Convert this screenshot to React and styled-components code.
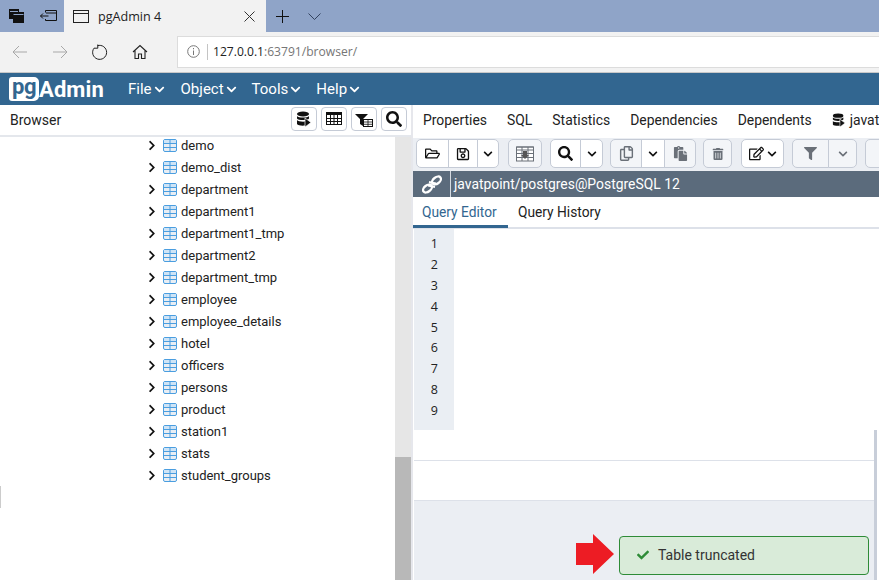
import React from 'react';
import styled, { createGlobalStyle } from 'styled-components';
import {
  FaRegFolderOpen, FaRegSave, FaSearch, FaRegCopy, FaPaste, FaTrashAlt, FaRegEdit, FaFilter, FaChevronRight, FaChevronDown, FaCheck,
} from 'react-icons/fa';

const Global = createGlobalStyle`
  html, body { margin: 0; padding: 0; background: #fff; }
  * { box-sizing: border-box; }
  #root { width: 879px; height: 580px; overflow: hidden; }
`;

const Page = styled.div`
  position: relative; width: 879px; height: 580px; overflow: hidden; display: flex; flex-direction: column;
  font-family: Roboto, "Liberation Sans", sans-serif; font-size: 14px; color: #222;
`;
const TabStrip = styled.div`
  height: 32px; background: #8fa4c8; display: flex; align-items: center; flex: none;
`;
const StripIcon = styled.div`
  width: ${p => p.$w}px; display: flex; justify-content: center; align-items: center; color: #111;
`;
const BrowserTab = styled.div`
  width: 202px; height: 32px; background: #f2f2f2; display: flex; align-items: center; padding-left: 9px;
  font-family: "Open Sans", sans-serif; font-size: 12.6px; color: #222;
`;
const TabTitle = styled.span`
  margin-left: 9px; flex: 1;
`;
const TabClose = styled.div`
  width: 34px; display: flex; justify-content: center;
`;
const AddressBar = styled.div`
  height: 41px; background: #f2f2f2; border-bottom: 1px solid #c8c8c8; display: flex; align-items: center; flex: none; padding-bottom: 1px;
`;
const NavBtn = styled.div`
  width: 40px; display: flex; justify-content: center; align-items: center;
`;
const UrlBox = styled.div`
  margin-left: 17px; flex: 1; height: 32px; margin-right: -4px; background: #fff; border: 1px solid #dcdcdc;
  display: flex; align-items: center; padding-left: 9px;
  font-family: "Open Sans", sans-serif; font-size: 12.1px; color: #767676;
`;
const UrlDivider = styled.div`
  width: 1px; height: 16px; background: #c4c4c4; margin: 0 5px 0 7px;
`;
const UrlHost = styled.span` color: #222; `;
const NavBar = styled.div`
  height: 32px; background: #326690; display: flex; align-items: center; flex: none; padding-left: 9px;
`;
const Logo = styled.div`
  display: flex; align-items: center; width: 119px; font-family: Roboto, sans-serif; font-weight: 700; color: #fff; font-size: 22px; letter-spacing: .1px;
`;
const LogoBadge = styled.span`
  width: 30px; height: 24px; background: #fff; color: #326690; border-radius: 3px 5px 5px 3px; display: flex; align-items: center; justify-content: center;
  font-size: 22px; line-height: 20px; padding-bottom: 4px; letter-spacing: -.4px;
`;
const Menu = styled.div`
  display: flex; align-items: center; gap: 2px; color: #fff; font-size: 15px; margin-right: ${p => p.$mr}px;
  svg { width: 11px; height: 11px; margin-top: 1px; }
`;
const Body = styled.div`
  flex: 1; display: flex; min-height: 0;
`;
const LeftPanel = styled.div`
  width: 411px; flex: none; display: flex; flex-direction: column; background: #fff;
`;
const PanelHead = styled.div`
  height: 32px; flex: none; display: flex; align-items: center; padding: 0 4px 3px 10px; border-bottom: 2px solid #e4e7ec; gap: 4px; font-size: 14px;
`;
const PanelTitle = styled.span` flex: 1; padding-top: 2px; `;
const IconBtn = styled.div`
  width: 26px; height: 24px; border: 1px solid #c5cbd6; border-radius: 4px; display: flex; align-items: center; justify-content: center; color: #111; background: #fff;
`;
const LeftBody = styled.div`
  flex: 1; display: flex; min-height: 0;
`;
const Tree = styled.div`
  flex: 1; overflow: hidden;
`;
const TreeList = styled.div`
  margin-top: -3px; padding-left: 146px;
`;
const TreeRow = styled.div`
  height: 22px; display: flex; align-items: center; font-size: 13px; color: #222;
`;
const Chevron = styled.div`
  width: 17px; display: flex; align-items: center; color: #111; svg { width: 10px; height: 11px; margin-left: 1px; }
`;
const RowLabel = styled.span` margin-left: 4px; `;
const Scroll = styled.div`
  width: 16px; flex: none; background: #e6e6e6; display: flex; flex-direction: column; justify-content: flex-end;
`;
const ScrollThumb = styled.div`
  height: 123px; background: #b8b8b8;
`;
const RightPanel = styled.div`
  flex: 1; display: flex; flex-direction: column; min-width: 0; border-left: 2px solid #e6e7ec; overflow: hidden;
`;
const PropTabs = styled.div`
  height: 33px; flex: none; display: flex; align-items: center; gap: 20px; padding-left: 10px; white-space: nowrap; background: #fff; padding-bottom: 3px; font-size: 13.92px;
`;
const PropConn = styled.span`
  display: flex; align-items: center; gap: 4px;
`;
const Toolbar = styled.div`
  height: 33px; flex: none; background: #ebeef3; display: flex; align-items: flex-start; padding: 1px 0 0 3px; white-space: nowrap;
`;
const Group = styled.div`
  display: flex; flex: none; height: 29px; margin-right: ${p => p.$mr}px;
`;
const ToolBtn = styled.div`
  width: ${p => p.$w}px; height: 29px; flex: none; display: flex; align-items: center; justify-content: center; gap: 3px;
  background: ${p => p.$off ? '#f3f5f8' : '#fff'}; color: ${p => p.$off ? '#6a7078' : '#111'};
  border: 1px solid #c5cbd6; margin-left: -1px;
  &:first-child { margin-left: 0; border-radius: 5px 0 0 5px; }
  &:last-child { border-radius: 0 5px 5px 0; }
  &:only-child { border-radius: 5px; }
`;
const TitleBar = styled.div`
  height: 26px; flex: none; background: #5b6b7c; display: flex; align-items: center; color: #fff; font-size: 13.9px;
`;
const TitleIcon = styled.div`
  width: 38px; height: 26px; display: flex; align-items: center; justify-content: center; border-right: 1px solid #d6dbe2; margin-right: 3px;
`;
const QueryTabs = styled.div`
  height: 32px; flex: none; display: flex; background: #fff; border-bottom: 2px solid #dde1e9; font-size: 13.75px;
`;
const QueryTab = styled.div`
  height: 31px; padding: 7px 0 0 ${p => p.$active ? 9 : 10}px; width: ${p => p.$w}px; white-space: nowrap; color: ${p => p.$active ? '#326690' : '#222'};
  border-bottom: ${p => p.$active ? '3px solid #326690' : 'none'};
`;
const Editor = styled.div`
  height: 201px; flex: none; display: flex; background: #fff; padding-left: 1px;
`;
const Gutter = styled.div`
  width: 40px; background: #eaeef3; padding-top: 5px;
`;
const LineNo = styled.div`
  height: 20.9px; line-height: 20.9px; text-align: right; padding-right: 16px; font-family: "Open Sans", sans-serif; font-size: 12.5px; color: #222;
`;
const Lower = styled.div`
  flex: 1; display: flex; flex-direction: column; margin-left: 1px; border-right: 3px solid #c8ced9; margin-right: 2px;
`;
const WhiteStrip = styled.div`
  height: ${p => p.$h}px; flex: none; background: #fff; border-bottom: 1px solid #dde1e9;
`;
const Status = styled.div`
  flex: 1; background: #ebeef3;
`;
const Toast = styled.div`
  position: absolute; left: 619px; top: 536px; width: 250px; height: 39px; background: #d9ebd9; border: 1px solid #2e8b37; border-radius: 4px;
  display: flex; align-items: center; padding: 0 0 2px 17px; gap: 9px; color: #333;
  svg { color: #2e8b37; }
`;
const Arrow = styled.svg`
  position: absolute; left: 576px; top: 534px;
`;
const EdgeMark = styled.div`
  position: absolute; left: 0; top: 486px; width: 1px; height: 22px; background: #ccc;
`;

const TableIcon = () => (
  <svg width="14" height="13" viewBox="0 0 14 13" style={{ flex: 'none' }}>
    <rect x=".5" y=".5" width="13" height="12" rx="1.5" fill="#e9eef4" stroke="#4a9ee0" />
    <rect x="1" y="1" width="12" height="3" fill="#cfe4f6" />
    <path d="M1 4.5h12M1 8.5h12M7 1v11" stroke="#4a9ee0" fill="none" />
  </svg>
);
const DbArrow = ({ size = 16, color = '#111' }) => (
  <svg width={size} height={size} viewBox="0 0 16 16">
    <ellipse cx="7" cy="3" rx="6" ry="2.5" fill={color} />
    <path d="M1 5c1 2 11 2 12 0v2.5c-1 2-11 2-12 0zM1 9c1 2 9 2 10 1v4c-2 1-9 1-10-1z" fill={color} />
    <path d="M9 7l6 4.5-6 4.5z" fill={color} stroke="#fff" strokeWidth=".7" />
  </svg>
);
const GridIcon = () => (
  <svg width="16" height="13" viewBox="0 0 16 13">
    <rect x=".5" y=".5" width="15" height="12" fill="#fff" stroke="#111" />
    <rect x="0" y="0" width="16" height="3" fill="#111" />
    <path d="M0 6.5h16M0 9.5h16M4.5 3v10M8 3v10M11.5 3v10" stroke="#111" fill="none" />
  </svg>
);
const FilterTable = () => (
  <svg width="18" height="16" viewBox="0 0 18 16">
    <path d="M0 3h13l-5 5v7l-3-2V8z" fill="#111" />
    <rect x="8.5" y="8.5" width="9" height="7" fill="#fff" stroke="#111" />
    <path d="M8.5 11h9M8.5 13.3h9M13 8.5v7" stroke="#111" fill="none" strokeWidth=".8" />
  </svg>
);
const ViewData = () => (
  <svg width="18" height="16" viewBox="0 0 18 16">
    <rect x=".5" y="1" width="17" height="14" fill="#fff" stroke="#6a7078" />
    <path d="M.5 1h17v3H.5zM6 1v14M12 1v14M.5 7.5h17M.5 11.5h17" stroke="#6a7078" fill="none" />
    <path d="M7 5h4v4h2l-4 4-4-4h2z" fill="#555" />
  </svg>
);
const ChainIcon = () => (
  <svg width="20" height="19" viewBox="0 0 20 19" fill="none" stroke="#fff" strokeWidth="2.3">
    <ellipse cx="5.5" cy="13.5" rx="5" ry="3.2" transform="rotate(-38 5.5 13.5)" />
    <ellipse cx="14.5" cy="5.5" rx="5" ry="3.2" transform="rotate(-38 14.5 5.5)" />
    <path d="M6 10.5l7 1.5M7 7l7 1.5" strokeWidth="2" />
  </svg>
);
const Thin = ({ children, w = 16, h = 16, vb = '0 0 16 16', c = '#111', sw = 1 }) => (
  <svg width={w} height={h} viewBox={vb} fill="none" stroke={c} strokeWidth={sw}>{children}</svg>
);
const Angle = ({ color = '#111' }) => <FaChevronDown size={10} color={color} />;

const tables = ['demo', 'demo_dist', 'department', 'department1', 'department1_tmp', 'department2', 'department_tmp', 'employee', 'employee_details', 'hotel', 'officers', 'persons', 'product', 'station1', 'stats', 'student_groups'];
const menus = [['File', 16], ['Object', 15], ['Tools', 15], ['Help', 0]];

export default function App() {
  return (
    <Page>
      <Global />
      <TabStrip>
        <StripIcon $w={32}>
          <svg width="15" height="14" viewBox="0 0 15 14"><path d="M0 0h10v3h5v11H4v-4H0z" fill="#111" /><path d="M1 2.5h8" stroke="#8fa4c8" /><path d="M4.5 5.5h10" stroke="#8fa4c8" /></svg>
        </StripIcon>
        <StripIcon $w={32}>
          <Thin w="17" h="12" vb="0 0 17 12"><path d="M5.5 2.5V.5h11v10h-11V9M.5 6h8M3 3.5L.5 6 3 8.5" /><path d="M6 3h10" /></Thin>
        </StripIcon>
        <BrowserTab>
          <Thin w="16" h="13" vb="0 0 16 13" c="#222"><rect x=".5" y=".5" width="15" height="12" /><path d="M.5 3.5h15" /></Thin>
          <TabTitle>pgAdmin 4</TabTitle>
          <TabClose><Thin w="11" h="11" vb="0 0 11 11" c="#333"><path d="M.5.5l10 10M10.5.5l-10 10" /></Thin></TabClose>
        </BrowserTab>
        <StripIcon $w={32}><Thin w="13" h="13" vb="0 0 13 13"><path d="M6.5 0v13M0 6.5h13" /></Thin></StripIcon>
        <StripIcon $w={32}><Thin w="13" h="7" vb="0 0 13 7" c="#33435f"><path d="M.5.5l6 6 6-6" /></Thin></StripIcon>
      </TabStrip>
      <AddressBar>
        <NavBtn><Thin c="#a8a8a8"><path d="M15 8H1M7 2L1 8l6 6" /></Thin></NavBtn>
        <NavBtn><Thin c="#a8a8a8"><path d="M1 8h14M9 2l6 6-6 6" /></Thin></NavBtn>
        <NavBtn><Thin c="#222"><path d="M5.5 1.7A7 7 0 1 1 2 4.2M5.8.5v3.7H2" /></Thin></NavBtn>
        <NavBtn><Thin c="#222" sw={1.1}><path d="M1 8l7-6.5L15 8M3 6.5V14.5h3.5V10h3v4.5H13V6.5" /></Thin></NavBtn>
        <UrlBox>
          <Thin w="13" h="13" vb="0 0 13 13" c="#777"><circle cx="6.5" cy="6.5" r="5.8" /><path d="M6.5 5.5v4.5M6.5 3v1.3" /></Thin>
          <UrlDivider />
          <span><UrlHost>127.0.0.1</UrlHost>:63791/browser/</span>
        </UrlBox>
      </AddressBar>
      <NavBar>
        <Logo><LogoBadge>pg</LogoBadge>Admin</Logo>
        {menus.map(([m, mr]) => (
          <Menu key={m} $mr={mr}>{m}<FaChevronDown /></Menu>
        ))}
      </NavBar>
      <Body>
        <LeftPanel>
          <PanelHead>
            <PanelTitle>Browser</PanelTitle>
            <IconBtn><DbArrow /></IconBtn>
            <IconBtn><GridIcon /></IconBtn>
            <IconBtn><FilterTable /></IconBtn>
            <IconBtn><FaSearch size={16} /></IconBtn>
          </PanelHead>
          <LeftBody>
            <Tree>
              <TreeList>
                {tables.map(t => (
                  <TreeRow key={t}>
                    <Chevron><FaChevronRight /></Chevron>
                    <TableIcon />
                    <RowLabel>{t}</RowLabel>
                  </TreeRow>
                ))}
              </TreeList>
            </Tree>
            <Scroll><ScrollThumb /></Scroll>
          </LeftBody>
        </LeftPanel>
        <RightPanel>
          <PropTabs>
            <span>Properties</span>
            <span>SQL</span>
            <span>Statistics</span>
            <span>Dependencies</span>
            <span>Dependents</span>
            <PropConn><DbArrow size={14} />javatpoint/postgres@PostgreSQL 12</PropConn>
          </PropTabs>
          <Toolbar>
            <Group $mr={9}>
              <ToolBtn $w={33}><FaRegFolderOpen size={15} /></ToolBtn>
              <ToolBtn $w={30}><FaRegSave size={14} /></ToolBtn>
              <ToolBtn $w={22}><Angle /></ToolBtn>
            </Group>
            <Group $mr={8}>
              <ToolBtn $w={34} $off><ViewData /></ToolBtn>
            </Group>
            <Group $mr={7}>
              <ToolBtn $w={31}><FaSearch size={15} /></ToolBtn>
              <ToolBtn $w={23}><Angle /></ToolBtn>
            </Group>
            <Group $mr={7}>
              <ToolBtn $w={32} $off><FaRegCopy size={15} /></ToolBtn>
              <ToolBtn $w={24}><Angle /></ToolBtn>
              <ToolBtn $w={32} $off><FaPaste size={15} /></ToolBtn>
            </Group>
            <Group $mr={9}>
              <ToolBtn $w={29} $off><FaTrashAlt size={12} /></ToolBtn>
            </Group>
            <Group $mr={8}>
              <ToolBtn $w={43}><FaRegEdit size={15} /><Angle /></ToolBtn>
            </Group>
            <Group $mr={8}>
              <ToolBtn $w={37} $off><FaFilter size={13} /></ToolBtn>
              <ToolBtn $w={29} $off><Angle color="#6a7078" /></ToolBtn>
            </Group>
            <Group $mr={0}>
              <ToolBtn $w={30} $off />
            </Group>
          </Toolbar>
          <TitleBar>
            <TitleIcon><ChainIcon /></TitleIcon>
            javatpoint/postgres@PostgreSQL 12
          </TitleBar>
          <QueryTabs>
            <QueryTab $active $w={95}>Query Editor</QueryTab>
            <QueryTab $w={120}>Query History</QueryTab>
          </QueryTabs>
          <Editor>
            <Gutter>
              {[1, 2, 3, 4, 5, 6, 7, 8, 9].map(n => <LineNo key={n}>{n}</LineNo>)}
            </Gutter>
          </Editor>
          <Lower>
            <WhiteStrip $h={31} />
            <WhiteStrip $h={40} />
            <Status />
          </Lower>
        </RightPanel>
      </Body>
      <Arrow width="39" height="40" viewBox="0 0 39 40"><path d="M0 9h17V0l21 20-21 20v-9H0z" fill="#ed1c24" /></Arrow>
      <Toast><FaCheck size={12} />Table truncated</Toast>
      <EdgeMark />
    </Page>
  );
}
